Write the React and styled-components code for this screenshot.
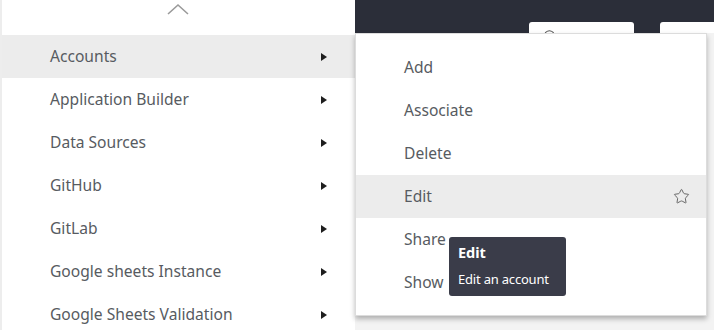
import React from "react";
import styled, { createGlobalStyle } from "styled-components";
import { Star, Search } from "lucide-react";

const Global = createGlobalStyle`
  html, body { margin: 0; padding: 0; }
  body {
    width: 714px; height: 330px; overflow: hidden;
    font-family: "Noto Sans", "Open Sans", sans-serif;
    background: #ffffff;
  }
`;

const Page = styled.div`
  display: grid;
  grid-template-columns: 355px 1fr;
  width: 714px;
  height: 330px;
  overflow: hidden;
`;

const Nav = styled.div`
  display: flex;
  flex-direction: column;
  background: #fff;
  border-left: 2px solid #ededed;
`;

const Collapse = styled.div`
  height: 35px;
  display: flex;
  justify-content: center;
  padding-top: 2px;
  box-sizing: border-box;
  padding-right: 2px;
`;

const Row = styled.div`
  height: 43px;
  flex: none;
  box-sizing: border-box;
  display: flex;
  align-items: center;
  justify-content: space-between;
  padding: 0 28px 1px 48px;
  background: ${(p) => (p.$active ? "#ececec" : "transparent")};
  color: #575b61;
  font-size: 15.6px;
`;

const Caret = styled.span`
  width: 0; height: 0;
  margin-top: 1px;
  border-top: 4px solid transparent;
  border-bottom: 4px solid transparent;
  border-left: 6px solid #1e1e1e;
`;

const Main = styled.div`
  position: relative;
  display: flex;
  flex-direction: column;
  background: #f3f3f3;
`;

const Header = styled.div`
  height: 33px;
  flex: none;
  background: #2b2e39;
  display: flex;
  align-items: flex-end;
  gap: 26px;
  padding-left: 174px;
  overflow: hidden;
`;

const HeadButton = styled.div`
  width: ${(p) => p.$w}px;
  height: 20px;
  margin-bottom: -9px;
  flex: none;
  background: #fff;
  border-radius: 3px;
  color: #444;
  padding: 4px 14px;
  box-sizing: border-box;
`;

const Body = styled.div`
  flex: 1;
  display: flex;
  justify-content: flex-end;
  padding-top: 20px;
`;

const DarkTab = styled.div`
  width: 7px;
  height: 26px;
  background: #2b2e39;
`;

const Menu = styled.div`
  position: absolute;
  left: 0;
  top: 33px;
  width: 352px;
  box-sizing: border-box;
  padding: 12px 0 11px;
  background: #fff;
  border: 1px solid #dcdcdc;
  box-shadow: 0 3px 5px rgba(0, 0, 0, 0.28);
  display: flex;
  flex-direction: column;
`;

const Item = styled.div`
  height: 43px;
  box-sizing: border-box;
  display: flex;
  align-items: center;
  justify-content: space-between;
  padding: 0 16px 1px 48px;
  background: ${(p) => (p.$active ? "#ececec" : "transparent")};
  color: #575b61;
  font-size: 15.6px;
`;

const StarIcon = styled(Star)`
  margin-top: 1px;
`;

const Tooltip = styled.div`
  position: absolute;
  left: 94px;
  top: 237px;
  width: 117px;
  height: 59px;
  box-sizing: border-box;
  padding: 5px 9px;
  background: #3a3c49;
  border-radius: 3px;
  color: #fff;
  display: flex;
  flex-direction: column;
  gap: 9px;
`;

const TipTitle = styled.div`
  font-weight: 700;
  font-size: 14.5px;
  line-height: 20px;
`;

const TipText = styled.div`
  font-size: 13px;
  line-height: 16px;
  letter-spacing: -0.2px;
  white-space: nowrap;
`;

const nav = [
  "Accounts",
  "Application Builder",
  "Data Sources",
  "GitHub",
  "GitLab",
  "Google sheets Instance",
  "Google Sheets Validation",
];

const actions = ["Add", "Associate", "Delete", "Edit", "Share", "Show"];

export default function App() {
  return (
    <>
      <Global />
      <Page>
        <Nav>
          <Collapse>
            <svg width="24" height="14" viewBox="0 0 24 14">
              <polyline points="2,12 12,3 22,12" fill="none" stroke="#9a9a9a" strokeWidth="1.6" />
            </svg>
          </Collapse>
          {nav.map((n, i) => (
            <Row key={n} $active={i === 0}>
              <span>{n}</span>
              <Caret />
            </Row>
          ))}
        </Nav>
        <Main>
          <Header>
            <HeadButton $w={105}>
              <Search size={14} strokeWidth={2} color="#555" />
            </HeadButton>
            <HeadButton $w={80} />
          </Header>
          <Body>
            <DarkTab />
          </Body>
          <Menu>
            {actions.map((a) => (
              <Item key={a} $active={a === "Edit"}>
                <span>{a}</span>
                {a === "Edit" && <StarIcon size={17} strokeWidth={1.4} color="#666" />}
              </Item>
            ))}
          </Menu>
          <Tooltip>
            <TipTitle>Edit</TipTitle>
            <TipText>Edit an account</TipText>
          </Tooltip>
        </Main>
      </Page>
    </>
  );
}
